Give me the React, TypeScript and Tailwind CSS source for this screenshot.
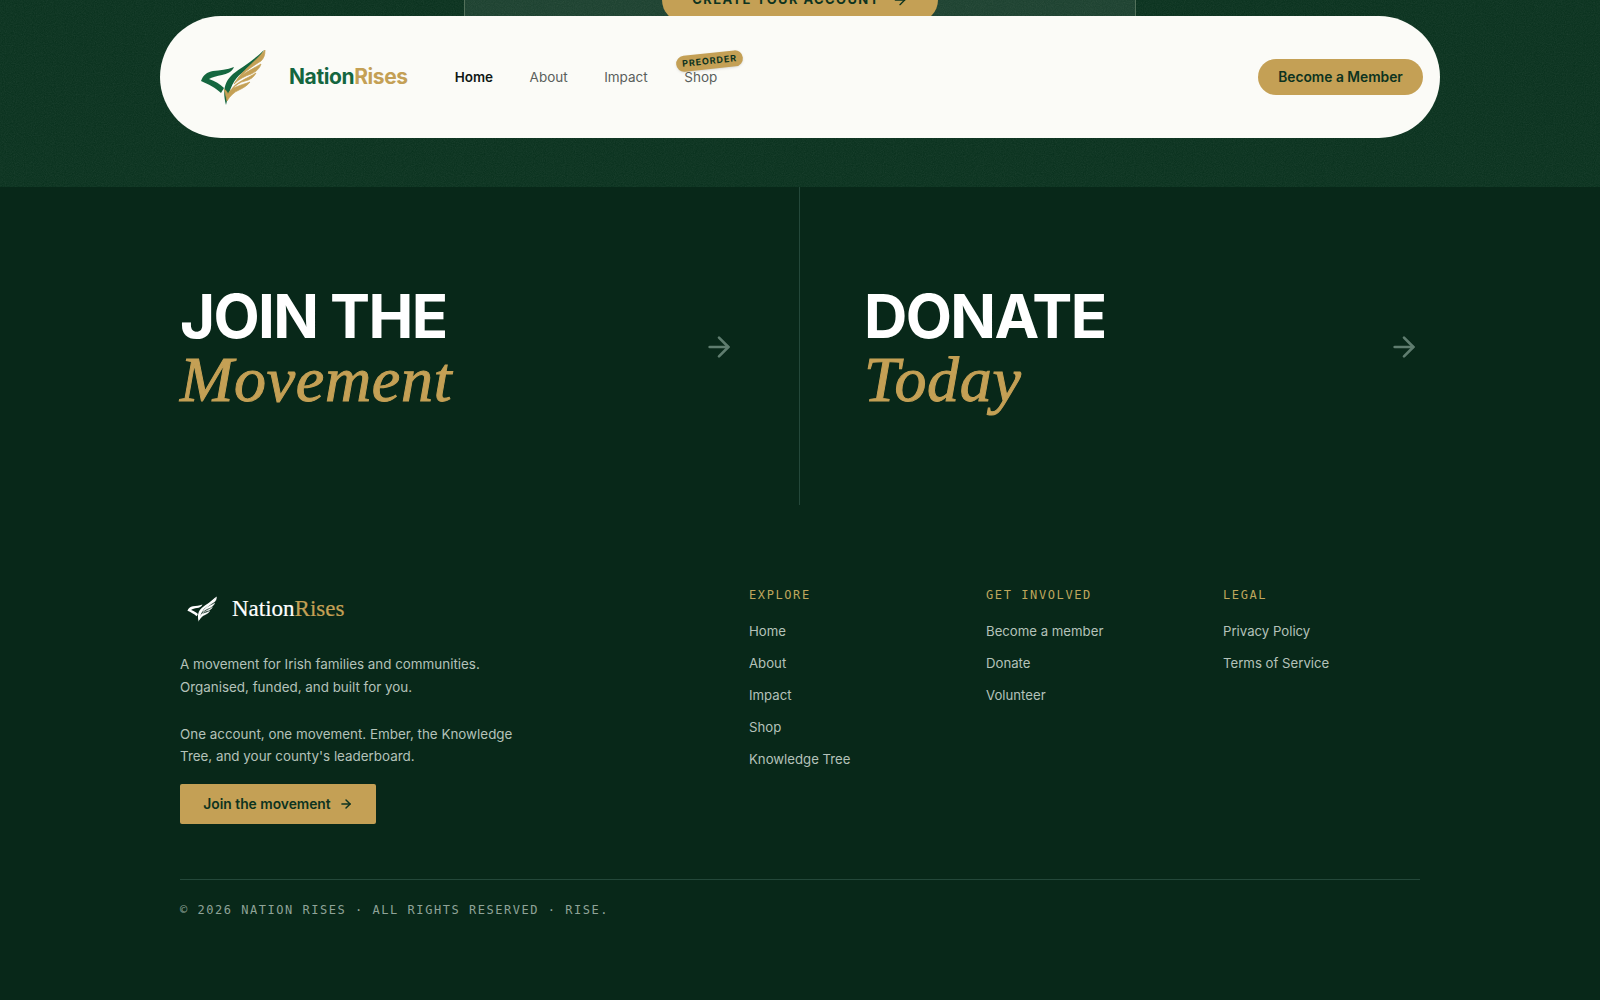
import { ArrowRight } from 'lucide-react';

const sans = "font-['Inter',sans-serif]";
const serif = "font-['Liberation_Serif',serif]";
const mono = "font-['DejaVu_Sans_Mono',monospace]";

const columns = [
  { title: 'EXPLORE', links: ['Home', 'About', 'Impact', 'Shop', 'Knowledge Tree'] },
  { title: 'GET INVOLVED', links: ['Become a member', 'Donate', 'Volunteer'] },
  { title: 'LEGAL', links: ['Privacy Policy', 'Terms of Service'] },
];

function Logo({ body, wing, className }: { body: string; wing: string; className: string }) {
  return (
    <svg viewBox="20 9 66 56" className={className}>
      {/* head */}
      <path fill={body} d="M21 41 C23 35 27 32 33 31 C40 30 47 30 54 27 C52 32 47 34 42 35 C37 36 32 37 29 39 C35 41 40 44 44 48 L41 53 C36 48 28 44 21 41 Z" />
      {/* neck sweep */}
      <path fill={body} d="M46 65 C42 50 45 41 53 34 C62 27 73 21 84 10 C79 20 70 27 62 33 C54 39 50 47 46 65 Z" />
      {/* feathers */}
      <g fill={wing} stroke={wing} strokeWidth="0.7">
        <path d="M85 10 C85 15 84 18 81 21 C73 26 65 31 57 40 C61 32 73 24 85 10 Z" />
        <path d="M81 24 C80 28 76 32 71 34 C65 36 59 39 54 44 C58 36 69 31 81 24 Z" />
        <path d="M76 33 C74 37 70 40 65 41 C60 42 56 45 52 49 C55 43 66 39 76 33 Z" />
        <path d="M44 49 C45 52 46 56 47 61 C50 56 54 52 59 50 C63 48 67 46 70 42 C65 44 60 45 56 47 C52 48 50 50 48 54 C47 52 46 50 44 49 Z" />
      </g>
    </svg>
  );
}

function CtaBlock({ top, bottom, border }: { top: string; bottom: string; border?: boolean }) {
  return (
    <a className={`flex h-[318px] w-1/2 items-start justify-between pt-[97px] ${border ? 'border-r border-[#24483a] pl-[180px] pr-[64px]' : 'pl-[64px] pr-[180px]'}`}>
      <div>
        <div className={`${sans} text-[60px] font-bold leading-[64px] tracking-[-1.6px] text-white`}>{top}</div>
        <div className={`${serif} text-[64px] leading-[64px] tracking-[0.7px] italic text-[#c4a055] [-webkit-text-stroke:1px_#c4a055]`}>{bottom}</div>
      </div>
      <ArrowRight className="mt-[47px] h-8 w-8 text-[#5f7d6f]" strokeWidth={2} />
    </a>
  );
}

export default function App() {
  return (
    <div className={`${sans} h-[1000px] w-full overflow-hidden bg-[#082819]`}>
      {/* Top band */}
      <section className="relative h-[187px] bg-[#07301c]">
        <svg className="absolute inset-0 h-full w-full opacity-[0.1]">
          <filter id="grain">
            <feTurbulence type="fractalNoise" baseFrequency="0.9" numOctaves="2" />
            <feColorMatrix type="saturate" values="0" />
          </filter>
          <rect width="100%" height="100%" filter="url(#grain)" />
        </svg>
        <div className="relative mx-auto flex h-4 w-[672px] justify-center border-x border-[#52705a] bg-[#ffffff14]">
          <div className="-mt-[22px] flex h-11 w-[276px] items-center justify-center gap-3 rounded-full bg-[#c4a055] text-[13px] font-bold tracking-[1.4px] text-[#0d3320]">
            CREATE YOUR ACCOUNT
            <ArrowRight className="h-4 w-4" />
          </div>
        </div>
        {/* Nav */}
        <nav className="relative mx-auto flex h-[122px] w-[1280px] items-center justify-between rounded-[61px] bg-[#fbfbf7] pl-[40px] pr-[17px]">
          <div className="flex items-center">
            <Logo body="#14663f" wing="#c4a055" className="h-[56px] w-[66px]" />
            <span className="ml-[23px] text-[21px] font-bold tracking-[-0.4px] text-[#14663f]">
              Nation<span className="text-[#c4a055]">Rises</span>
            </span>
            <div className="ml-[47px] flex items-center gap-[36.5px] text-[13.5px] text-[#5a5f5c]">
              <a className="font-semibold text-[#101815]">Home</a>
              <a>About</a>
              <a>Impact</a>
              <a className="relative">
                Shop
                <span className="absolute -top-[14px] -left-[8px] -rotate-6 rounded-full bg-[#c4a055] px-[6px] py-[1px] text-[9px] font-bold tracking-[0.9px] text-[#0d3320] shadow-sm">
                  PREORDER
                </span>
              </a>
            </div>
          </div>
          <a className="flex h-9 w-[165px] items-center justify-center rounded-full bg-[#c4a055] text-[13.8px] font-semibold text-[#0d3320]">
            Become a Member
          </a>
        </nav>
      </section>

      {/* Join / Donate */}
      <section className="flex">
        <CtaBlock top="JOIN THE" bottom="Movement" border />
        <CtaBlock top="DONATE" bottom="Today" />
      </section>

      {/* Footer */}
      <footer className="mx-auto w-[1240px] pt-[84px]">
        <div className="grid grid-cols-[529px_197px_197px_197px] gap-x-10">
          <div>
            <div className="flex items-center pt-[7px]">
              <Logo body="#ffffff" wing="#ffffff" className="ml-[7px] h-[26px] w-[30px]" />
              <span className={`${serif} ml-[15px] text-[23px] leading-[26px] text-white [-webkit-text-stroke:0.2px_currentColor]`}>
                Nation<span className="text-[#c4a055]">Rises</span>
              </span>
            </div>
            <p className="mt-[31px] text-[13.4px] leading-[22.75px] text-[#b4c2b9]">
              A movement for Irish families and communities.
              <br />
              Organised, funded, and built for you.
            </p>
            <p className="mt-6 text-[13.4px] leading-[22.75px] text-[#b4c2b9]">
              One account, one movement. Ember, the Knowledge
              <br />
              Tree, and your county's leaderboard.
            </p>
            <a className="mt-4 flex h-10 w-[196px] items-center justify-center gap-2 rounded-[2px] bg-[#c4a055] text-[13.8px] font-semibold text-[#0d3320]">
              Join the movement
              <ArrowRight className="h-3.5 w-3.5" strokeWidth={2.5} />
            </a>
          </div>
          {columns.map(col => (
            <div key={col.title}>
              <h4 className={`${mono} -mt-[2px] text-[12px] leading-4 tracking-[1.6px] text-[#bfa65c]`}>{col.title}</h4>
              <ul className="mt-[17px] flex flex-col gap-[10px] text-[13.2px] leading-[22px] text-[#b4c2b9]">
                {col.links.map(link => (
                  <li key={link}>{link}</li>
                ))}
              </ul>
            </div>
          ))}
        </div>
        <div className={`${mono} mt-[55px] border-t border-[#24483a] pt-[22px] text-[12px] leading-4 tracking-[1.53px] text-[#8fa398]`}>
          © 2026 NATION RISES · ALL RIGHTS RESERVED · RISE.
        </div>
      </footer>
    </div>
  );
}
